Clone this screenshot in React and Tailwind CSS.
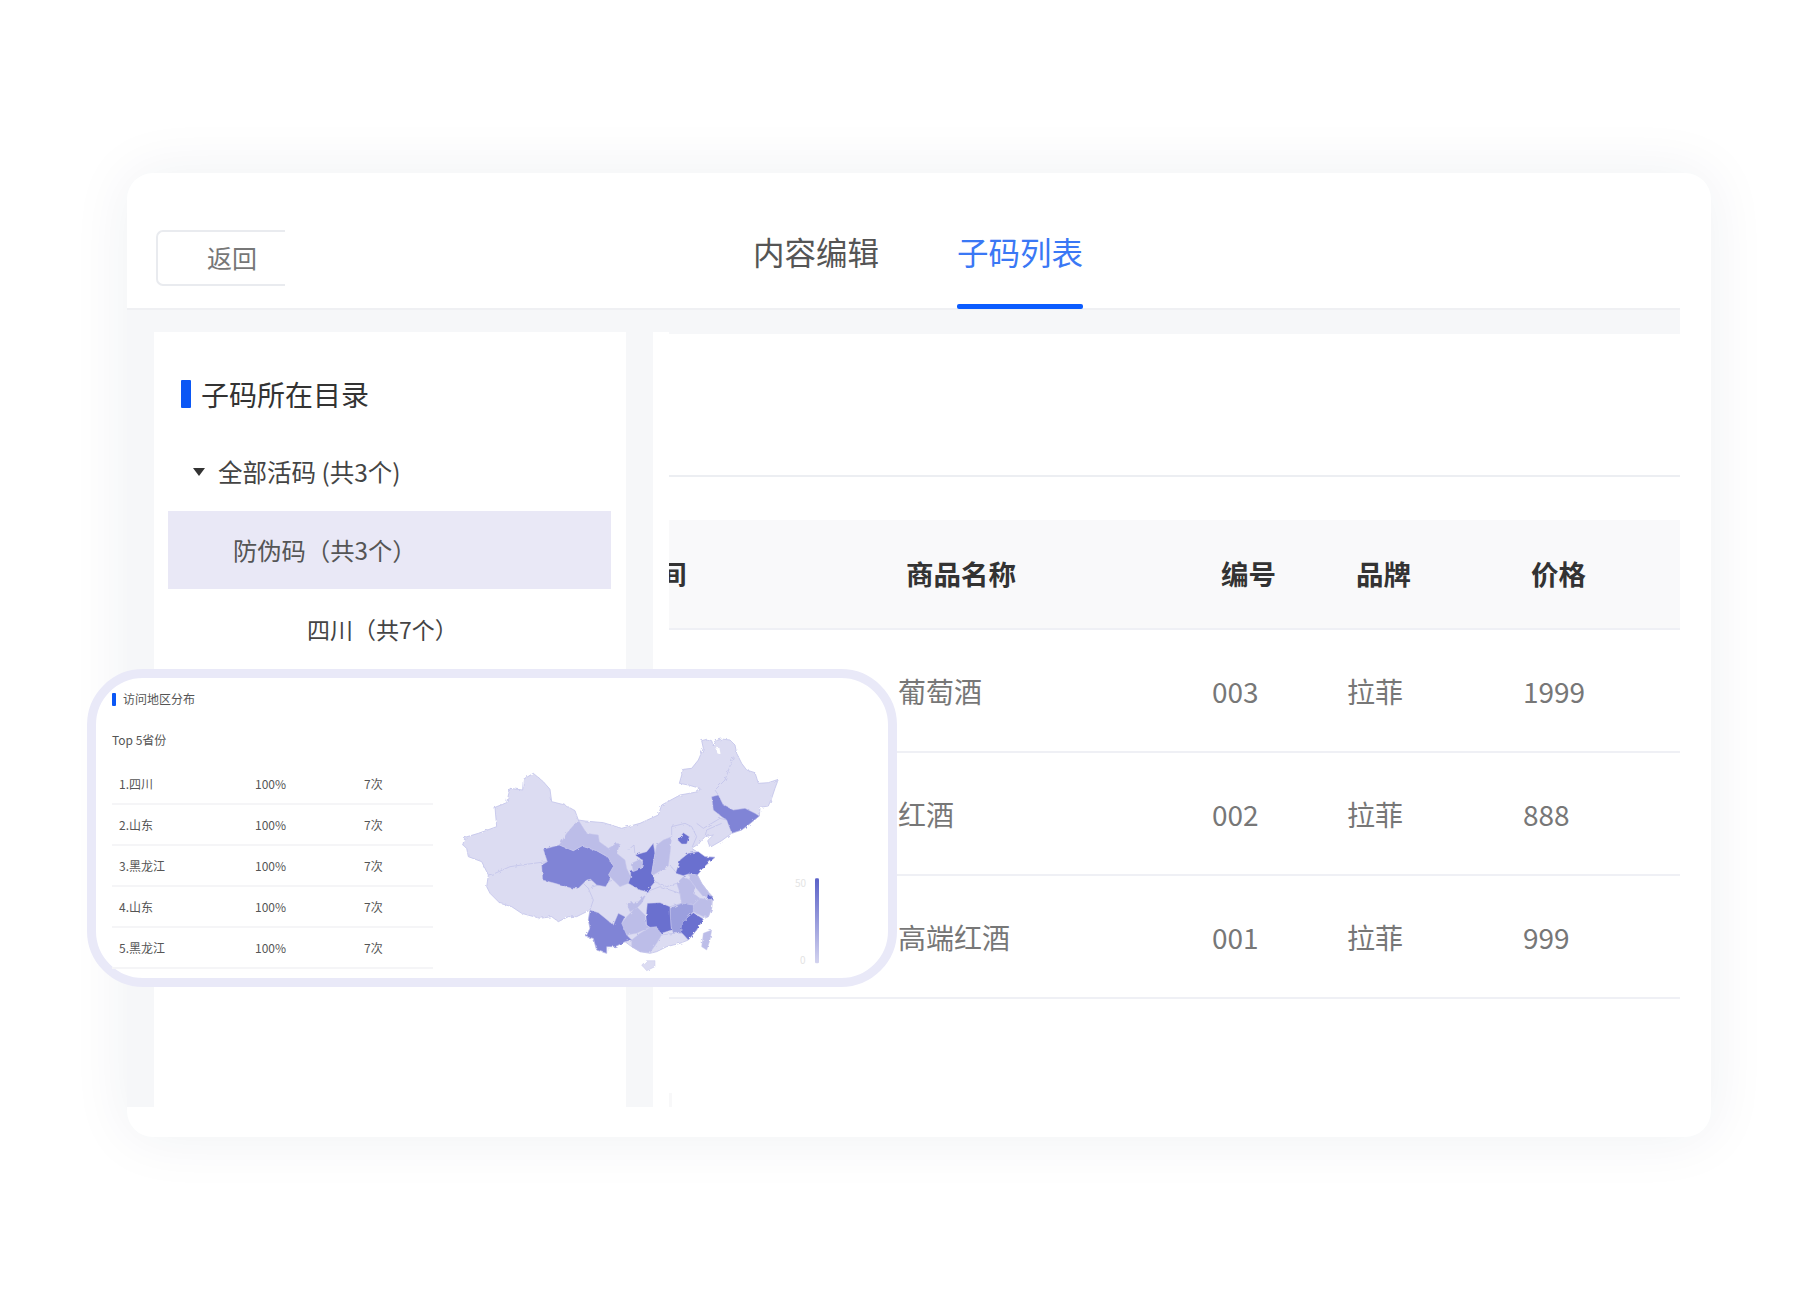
import React from "react";

const L = "#dcdcf2", M = "#bcbde8", D = "#8084d6", X = "#6a6fcf", J = "#9b9fde";

const outline = "68,375 75,352 115,340 170,320 165,262 200,248 210,205 248,210 250,178 280,160 310,185 330,208 335,245 375,255 405,272 415,300 435,303 490,308 545,325 600,310 655,285 665,255 720,225 775,215 780,205 745,195 718,190 730,148 755,145 775,120 790,85 785,62 800,58 815,62 820,78 828,62 845,57 870,60 885,75 890,100 905,130 920,150 945,158 955,190 985,188 1015,178 1005,205 995,235 985,258 960,262 958,288 925,315 905,330 875,340 845,362 810,382 803,362 820,345 795,350 775,372 755,385 772,396 795,410 825,412 795,438 772,465 785,490 800,510 818,530 815,565 805,590 790,597 770,630 745,660 720,670 680,680 650,695 630,700 600,695 575,680 555,665 525,680 500,680 500,700 470,690 460,655 438,650 450,625 445,600 450,570 410,590 385,590 355,605 335,590 300,595 245,580 215,560 180,550 150,520 140,500 145,465 125,425 85,410 80,385";

const provinces = [
  [D, "310,388 358,375 400,392 425,378 470,392 505,412 520,440 508,462 510,478 497,500 470,495 452,478 440,480 415,505 395,505 345,490 308,480 305,435 322,425"],
  [M, "415,300 440,340 475,345 478,365 505,385 530,370 540,372 530,400 555,420 560,445 572,470 565,490 540,500 505,465 520,440 505,412 470,392 425,378 400,392 358,375 380,340"],
  [X, "640,370 645,400 635,460 645,485 620,515 600,510 565,490 572,470 572,455 605,445 608,420 585,405 620,395"],
  [M, "575,430 600,418 608,428 603,445 580,455"],
  [M, "695,350 690,400 685,438 640,465 635,460 645,400 650,375 670,360"],
  [X, "713,360 730,338 748,350 740,372 725,372"],
  [X, "707,460 720,420 745,400 775,395 795,410 825,412 795,438 772,465 745,462 730,467"],
  [M, "745,462 772,465 785,490 800,510 815,530 790,530 765,500 750,480"],
  [M, "710,490 730,470 750,480 765,500 760,520 780,535 760,555 725,550 720,520"],
  [M, "780,535 815,540 815,565 805,590 790,590 760,575 760,555"],
  [X, "803,522 818,530 815,538 800,538"],
  [J, "690,565 725,550 760,555 760,575 745,590 725,620 730,640 700,640 693,620"],
  [X, "745,590 760,578 790,597 770,630 745,660 722,635 725,610"],
  [X, "622,550 660,548 690,560 690,570 693,620 695,630 665,640 645,635 620,615 618,590"],
  [M, "545,610 560,590 590,560 615,585 618,615 630,622 590,640 560,645"],
  [M, "560,550 595,545 620,520 605,550 590,565 570,575"],
  [M, "575,660 600,640 630,622 650,620 665,645 650,670 630,698 600,695 575,680"],
  [D, "450,570 475,578 490,590 520,615 535,580 555,590 545,610 560,645 575,660 555,665 525,680 500,680 500,700 470,690 460,655 438,650 450,625 445,600"],
  [D, "815,230 835,225 850,255 880,270 915,265 945,280 958,288 925,315 905,330 875,340 860,300 845,290 820,270"],
  [L, "605,735 620,722 645,722 645,740 620,752"],
  [M, "785,680 790,640 815,630 810,660 800,690"],
];

const borders = [
  "145,465 165,460 210,440 280,430 322,425",
  "395,505 430,490 445,505 460,540 450,570",
  "880,110 855,180 825,210 835,225",
  "415,300 358,375",
  "565,390 582,375 585,405",
  "695,350 695,320 735,310 755,320 770,350 755,385",
  "770,310 790,325 840,295 860,300",
  "795,350 800,330 845,310",
  "645,485 680,500 710,490",
  "620,515 660,500 720,520 725,550 690,560",
  "445,505 520,480 565,490 620,515",
  "665,645 700,640 722,635",
  "690,435 710,460",
];

const rows = [
  ["葡萄酒", "003", "拉菲", "1999"],
  ["红酒", "002", "拉菲", "888"],
  ["高端红酒", "001", "拉菲", "999"],
];

const top5 = ["1.四川", "2.山东", "3.黑龙江", "4.山东", "5.黑龙江"];

function ChinaMap() {
  return (
    <svg viewBox="0 0 1260 810" className="w-[420px] h-[270px] shrink-0" fill="none">
      <defs>
        <linearGradient id="legendGrad" x1="0" y1="0" x2="0" y2="1">
          <stop offset="0" stopColor="#5b62c8" />
          <stop offset="1" stopColor="#d3d3ef" />
        </linearGradient>
        <filter id="rough" x="-5%" y="-5%" width="110%" height="110%">
          <feTurbulence type="fractalNoise" baseFrequency="0.09" numOctaves="2" seed="4" result="n" />
          <feDisplacementMap in="SourceGraphic" in2="n" scale="9" />
          <feGaussianBlur stdDeviation="0.9" />
        </filter>
      </defs>
      <g filter="url(#rough)">
        <polygon points={outline} fill={L} stroke="#c3c4ea" strokeWidth="2.5" strokeLinejoin="round" />
        {borders.map((b, i) => (
          <polyline key={i} points={b} stroke="#c3c4ea" strokeWidth="2.5" strokeLinejoin="round" />
        ))}
        {provinces.map(([c, p], i) => (
          <polygon key={i} points={p} fill={c} stroke="#c9c9ec" strokeWidth="1.5" strokeLinejoin="round" />
        ))}
        <polygon points="828,80 838,82 842,104 832,100" fill="#ffffff" />
      </g>
      <rect x="1125" y="475" width="12" height="255" rx="4" fill="url(#legendGrad)" />
    </svg>
  );
}

export default function App() {
  return (
    <div className="w-full min-h-[1311px] bg-white pt-[173px] pl-[127px] [font-family:'Noto_Sans_CJK_SC','Noto_Sans',sans-serif]">
      <div className="relative w-[1584px] h-[964px] rounded-[26px] bg-white shadow-[0_0_60px_rgba(30,40,80,0.07)]">
        {/* header */}
        <div className="relative flex h-[137px] mr-[31px] border-b-2 border-[#eff0f3]">
          <div className="mt-[57px] ml-[29px] w-[129px] h-[56px] flex items-center pl-[49px] border-2 border-r-0 border-[#e9ebef] rounded-l-[7px] text-[25px] text-[#777777]">
            返回
          </div>
          <div className="ml-[468px] mt-[55px] text-[31.5px] leading-[46px] text-[#555555]">内容编辑</div>
          <div className="ml-[78px] mt-[55px] h-[81px] flex flex-col justify-between text-[31.5px] leading-[46px] text-[#3a78f5]">
            <span>子码列表</span>
            <span className="h-[5px] rounded-[2px] bg-[#0b5cff]" />
          </div>
        </div>

        {/* body */}
        <div className="flex h-[797px] mr-[31px] pt-[22px] pl-[27px] gap-[27px] bg-[#f6f7f9]">
          <div className="w-[472px] bg-white">
            <div className="mt-[48px] ml-[27px] flex items-center gap-[10px]">
              <span className="w-[10px] h-[28px] rounded-[1px] bg-[#0b57f5]" />
              <span className="text-[28px] leading-[28px] text-[#333333]">子码所在目录</span>
            </div>
            <div className="mt-[34px] mb-[9px] h-[60px] ml-[39px] flex items-center gap-[13px] text-[24.5px] text-[#444444]">
              <svg viewBox="0 0 12 8" className="w-[12px] h-[8px]">
                <polygon points="0,0 12,0 6,8" fill="#333333" />
              </svg>
              <span>全部活码 (共3个)</span>
            </div>
            <div className="ml-[14px] w-[443px] h-[78px] flex items-center pl-[65px] bg-[#e9e8f6] text-[24.3px] text-[#555555]">
              防伪码（共3个）
            </div>
            <div className="h-[80px] flex items-center pl-[153px] text-[23px] text-[#444444]">四川（共7个）</div>
          </div>

          <div className="flex-1 bg-white pl-[16px]">
            <div className="relative h-full bg-white">
              <div className="h-[2px] bg-[#f6f7f9]" />
              <div className="h-[143px] border-b-2 border-[#eceef2]" />
              <div className="mt-[43px] h-[110px] grid grid-cols-[237px_315px_135px_175px_1fr] items-center bg-[#f9f9fa] border-b-2 border-[#eff0f5] text-[27.5px] font-bold text-[#333333]">
                <span className="w-[17px] overflow-hidden whitespace-nowrap">
                  <span className="block ml-[-10px]">间</span>
                </span>
                <span>商品名称</span>
                <span>编号</span>
                <span>品牌</span>
                <span>价格</span>
              </div>
              {rows.map((r) => (
                <div
                  key={r[1]}
                  className="h-[123px] grid grid-cols-[229px_314px_135px_176px_1fr] items-center border-b-2 border-[#eff0f5] text-[28px] text-[#777777]"
                >
                  <span />
                  <span>{r[0]}</span>
                  <span>{r[1]}</span>
                  <span>{r[2]}</span>
                  <span>{r[3]}</span>
                </div>
              ))}
              <div className="absolute left-0 bottom-0 w-[3px] h-[14px] bg-[#f8f8f9]" />
            </div>
          </div>
        </div>

        {/* overlay */}
        <div className="absolute left-[-40px] top-[496px] w-[810px] h-[318px] flex rounded-[56px] border-[9px] border-[#e9e9f8] bg-white">
          <div className="w-[339px] ml-[16px] shrink-0">
            <div className="mt-[13px] h-[16px] flex items-center gap-[7px] text-[12px] leading-[16px] text-[#555555]">
              <span className="w-[4px] h-[13px] rounded-[1px] bg-[#0b57f5]" />
              访问地区分布
            </div>
            <div className="mt-[25px] text-[12px] leading-[16px] text-[#555555]">Top 5省份</div>
            <div className="mt-[16px] w-[321px]">
              {top5.map((t) => (
                <div
                  key={t}
                  className="h-[41px] grid grid-cols-[136px_109px_1fr] items-center pl-[7px] border-b-2 border-[#f5f5f7] text-[12px] text-[#555555]"
                >
                  <span>{t}</span>
                  <span>100%</span>
                  <span>7次</span>
                </div>
              ))}
            </div>
          </div>
          <div className="relative mt-[42px] ml-[-11px]">
            <ChinaMap />
            <span className="absolute left-[355px] top-[157px] text-[10px] leading-[12px] text-[#e4e4e4]">50</span>
            <span className="absolute left-[360px] top-[234px] text-[10px] leading-[12px] text-[#e4e4e4]">0</span>
          </div>
        </div>
      </div>
    </div>
  );
}
